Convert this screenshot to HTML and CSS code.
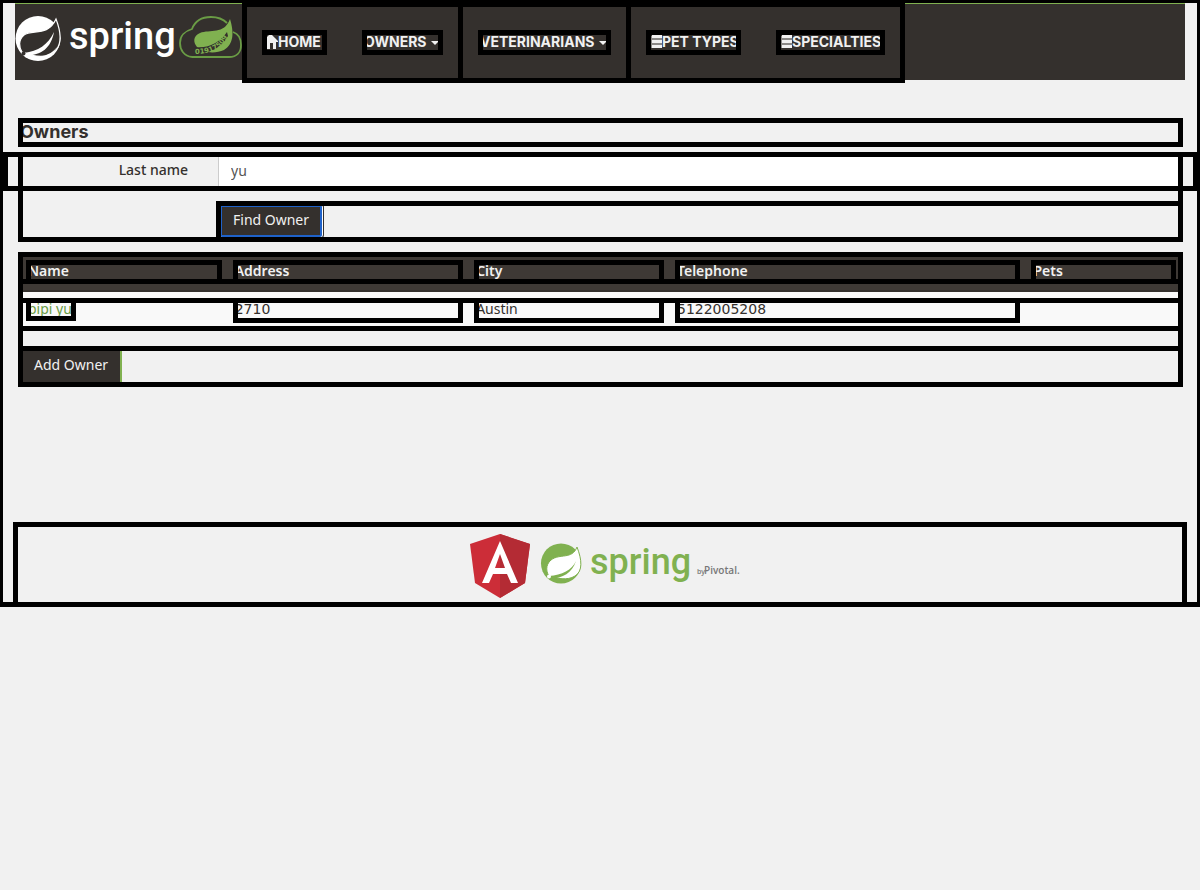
FILE: index.html
```html
<!DOCTYPE html>
<html lang="en">
<head>
<meta charset="utf-8">
<title>Owners</title>
<link rel="stylesheet" href="styles.css">
</head>
<body>
<div class="page boxed">
  <nav class="navbar">
    <a class="brand" href="#" aria-label="Spring home">
      <svg width="227" height="76" viewBox="15 4 227 76">
        <circle cx="38" cy="38.500" r="22.500" fill="#fff"/>
        <path d="M56 19C61 32 62 43 56 50C49 59 34 57 22 52C19 47 18 40 24 35C32 29 48 37 56 19Z" fill="#34302d" stroke="#fff" stroke-width="1.200"/>
        <path d="M24 53C38 51 48 45 54 32C51 48 42 55 25 56Z" fill="#fff"/>
        <path d="M25 56C40 59 51 55 57 47C52 58 38 64 25 57Z" fill="#fff"/>
        <circle cx="23.500" cy="53.500" r="2" fill="#34302d"/>
        <text class="wordmark wordmark-light" x="69" y="49" font-size="38">spring</text>
        <path d="M192 57C184 56 180 50 180 43C180 36 185 31 192 29C195 21 202 17 211 17C218 17 223 19 227 23M233 32C239 34 241 39 241 45C241 52 237 57 229 57H192" fill="none" stroke="#6a9c45" stroke-width="1.800"/>
        <path d="M230 19C234 32 234 44 224 50C215 54 203 53 197 47C193 42 193 36 200 33C210 29 224 35 230 19Z" fill="#80b150"/>
        <path id="digits" d="M195 54C209 54 222 50 229 34" fill="none"/>
        <path d="M194 47C209 49 220 42 227 32L228 36C222 47 210 54 194 54Z" fill="#34302d"/>
        <text class="digits" fill="#80b150"><textPath href="#digits">01917509</textPath></text>
      </svg>
    </a>
    <ul class="menu menu-main boxed">
      <li><a class="menu-link boxed" href="#"><svg width="14" height="14" viewBox="0 0 14 14"><path d="M2 14V6H1V4L4 1L5 0H8L11 3L14 6V7H12V14H9V8H6V14Z" fill="#f1f1f1"/></svg>Home</a></li>
      <li><a class="menu-link boxed" href="#">Owners<span class="caret"></span></a></li>
    </ul>
    <ul class="menu menu-vets boxed">
      <li><a class="menu-link boxed" href="#">Veterinarians<span class="caret"></span></a></li>
    </ul>
    <ul class="menu menu-lists boxed">
      <li><a class="menu-link boxed" href="#"><svg width="14" height="14" viewBox="0 0 14 14"><path d="M1 1H14V13H1Z" fill="#8a8886"/><path d="M4 0H14V3H4ZM4 5H14V8H4ZM4 10H14V13H4ZM1 1H3V3H1ZM1 6H3V8H1ZM1 11H3V13H1Z" fill="#f1f1f1"/></svg>Pet Types</a></li>
      <li><a class="menu-link boxed" href="#"><svg width="14" height="14" viewBox="0 0 14 14"><path d="M1 1H14V13H1Z" fill="#8a8886"/><path d="M4 0H14V3H4ZM4 5H14V8H4ZM4 10H14V13H4ZM1 1H3V3H1ZM1 6H3V8H1ZM1 11H3V13H1Z" fill="#f1f1f1"/></svg>Specialties</a></li>
    </ul>
  </nav>

  <main class="content">
    <h2 class="title boxed">Owners</h2>
    <form class="search boxed">
      <div class="row boxed">
        <label class="label" for="lastName">Last name</label>
        <div class="field"><input class="input" id="lastName" type="text" value="yu"></div>
      </div>
      <div class="row">
        <div class="field field-offset"><div class="actions boxed"><button class="button button-focus" type="button">Find Owner</button></div></div>
      </div>
    </form>

    <section class="results">
      <table class="owners">
        <colgroup><col class="col-name"><col class="col-address"><col class="col-city"><col class="col-phone"><col class="col-pets"></colgroup>
        <thead>
          <tr>
            <th><div class="cell boxed">Name</div></th>
            <th><div class="cell boxed">Address</div></th>
            <th><div class="cell boxed">City</div></th>
            <th><div class="cell boxed">Telephone</div></th>
            <th><div class="cell boxed">Pets</div></th>
          </tr>
        </thead>
        <tbody>
          <tr>
            <td><a class="owner boxed" href="#">pipi yu</a></td>
            <td><div class="cell number boxed">2710</div></td>
            <td><div class="cell boxed">Austin</div></td>
            <td><div class="cell number boxed">5122005208</div></td>
            <td></td>
          </tr>
        </tbody>
      </table>
      <div class="actions boxed"><button class="button" type="button">Add Owner</button></div>
    </section>
  </main>

  <footer class="footer boxed">
    <svg width="60" height="66" viewBox="0 0 60 66" role="img" aria-label="Angular">
      <path d="M30 1L60 11L55 50L30 65L5 50L0 11Z" fill="#cc2d38"/>
      <path d="M30 1L60 11L55 50L30 65Z" fill="#b42b34"/>
      <path d="M30 8L12 50H19L23 41H37L41 50H48ZM30 21L35 35H25Z" fill="#fff" fill-rule="evenodd"/>
    </svg>
    <svg width="200" height="66" viewBox="540 533 200 66" role="img" aria-label="Spring by Pivotal">
      <circle cx="561" cy="563.500" r="20" fill="#80b150"/>
      <path d="M577 547C582 560 583 571 575 576C567 581 557 578 550 577C546 573 545 565 551 560C560 553 572 560 577 547Z" fill="#fff" stroke="#80b150"/>
      <path d="M549 576C562 575 572 570 576 561C572 573 563 578 550 579Z" fill="#80b150"/>
      <circle cx="549" cy="576.500" r="2" fill="#fff"/>
      <text class="wordmark wordmark-green" x="590" y="574" font-size="36">spring</text>
      <text class="byline" x="697" y="574" font-size="7">by</text>
      <text class="byline" x="704" y="574" font-size="10">Pivotal.</text>
    </svg>
  </footer>
</div>
</body>
</html>
```
FILE: styles.css
```css
* { box-sizing: border-box; }

body {
  min-height: 100vh;
  margin: 0;
  background: #f1f1f1;
  color: #34302d;
  font: 14px/20px "Noto Sans", sans-serif;
}

a { color: inherit; text-decoration: none; }

.boxed {
  outline: 5px solid #000;
  outline-offset: -3px;
}

.page { padding: 3px 15px 0; }

/* Navigation */
.navbar {
  display: flex;
  height: 77px;
  background: #34302d;
  border-top: 1px solid #80b150;
}

.brand { flex: none; width: 229px; height: 76px; }
.brand svg { display: block; }

.wordmark { font-family: Roboto, sans-serif; font-weight: 500; }
.wordmark-light { fill: #fff; }
.wordmark-green { fill: #80b150; }

.digits { font: bold 7px "DejaVu Sans", sans-serif; }
.byline { font-family: "Open Sans", sans-serif; font-weight: 600; fill: #777; }

.menu {
  display: grid;
  flex: none;
  height: 77px;
  margin: 0;
  padding: 28px 0 0;
  list-style: none;
}

.menu + .menu { margin-left: -1px; }
.menu-main { grid-template-columns: 100px 117px; }
.menu-vets { grid-template-columns: 169px; }
.menu-lists { grid-template-columns: 130px 145px; }

.menu li { padding: 0 19px 0 20px; }
.menu li:last-child { padding-right: 20px; }

.menu-link {
  display: flex;
  align-items: center;
  height: 21px;
  padding-bottom: 1px;
  color: #f1f1f1;
  font: 700 14px/20px Inter, sans-serif;
  text-transform: uppercase;
  white-space: nowrap;
}

.menu-link svg { flex: none; }

.caret {
  margin: 2px 2px 0 auto;
  border: 4px solid transparent;
  border-top-color: #f1f1f1;
  border-bottom: 0;
}

/* Search form */
.content { padding: 40px 4px 0 5px; }

.title {
  height: 25px;
  margin: 0 0 9px;
  font: 700 18px/23px Inter, sans-serif;
}

.search { margin-bottom: 14px; }

.row {
  display: grid;
  grid-template-columns: 198px 1fr;
  margin: 0 -15px;
}

.row + .row { margin-top: 14px; }

.label { padding: 6px 15px 0; font-weight: 500; text-align: right; }
.field { padding: 0 15px; }
.field-offset { grid-column: 2; }

.input {
  display: block;
  width: 100%;
  height: 35px;
  padding: 4px 12px 6px;
  border: 1px solid #ccc;
  background: #fff;
  color: #555;
  font: inherit;
}

.actions { height: 37px; }

.button {
  display: block;
  height: 36px;
  padding: 3px 12px 5px;
  border: 2px solid #80b150;
  background: #34302d;
  color: #f1f1f1;
  font: inherit;
}

.button-focus {
  border-color: #34302d;
  border-width: 1px;
  padding: 4px 14px 6px;
  border-radius: 4px;
  box-shadow: inset 0 0 0 1px #fff, inset 0 0 0 3px #1f62c9;
}

/* Owners table */
.results { position: relative; }

.results::after,
.owners tr::after {
  content: "";
  position: absolute;
  inset: 0;
  outline: 5px solid #000;
  outline-offset: -3px;
  pointer-events: none;
}

.owners {
  width: 100%;
  margin-bottom: 19px;
  border-collapse: separate;
  border-spacing: 0;
  table-layout: fixed;
}

.col-name { width: 17.8%; }
.col-address { width: 20.8%; }
.col-city { width: 17.3%; }
.col-phone { width: 30.7%; }
.col-pets { width: 13.4%; }

.owners tr { position: relative; }
.owners thead tr::after { bottom: 10px; }
.owners tbody tr::after { top: 8px; }

.owners th {
  padding: 8px 7px 8px 8px;
  border-bottom: 2px solid #34302d;
  background: #3e3935;
  color: #f1f1f1;
  font-weight: 600;
  text-align: left;
}

.owners td {
  height: 37px;
  padding: 8px 7px 8px 8px;
  background: #f9f9f9;
  vertical-align: top;
}

.cell { height: 20px; line-height: 18px; }
.owners td .cell { height: 21px; }
.number { font-family: "DejaVu Sans", sans-serif; }
.owner { display: block; width: 46px; height: 19px; line-height: 18px; color: #6a9c45; }

/* Footer */
.footer {
  display: flex;
  justify-content: center;
  gap: 10px;
  height: 81px;
  margin-top: 139px;
  padding: 9px 0 0 9px;
}
```
